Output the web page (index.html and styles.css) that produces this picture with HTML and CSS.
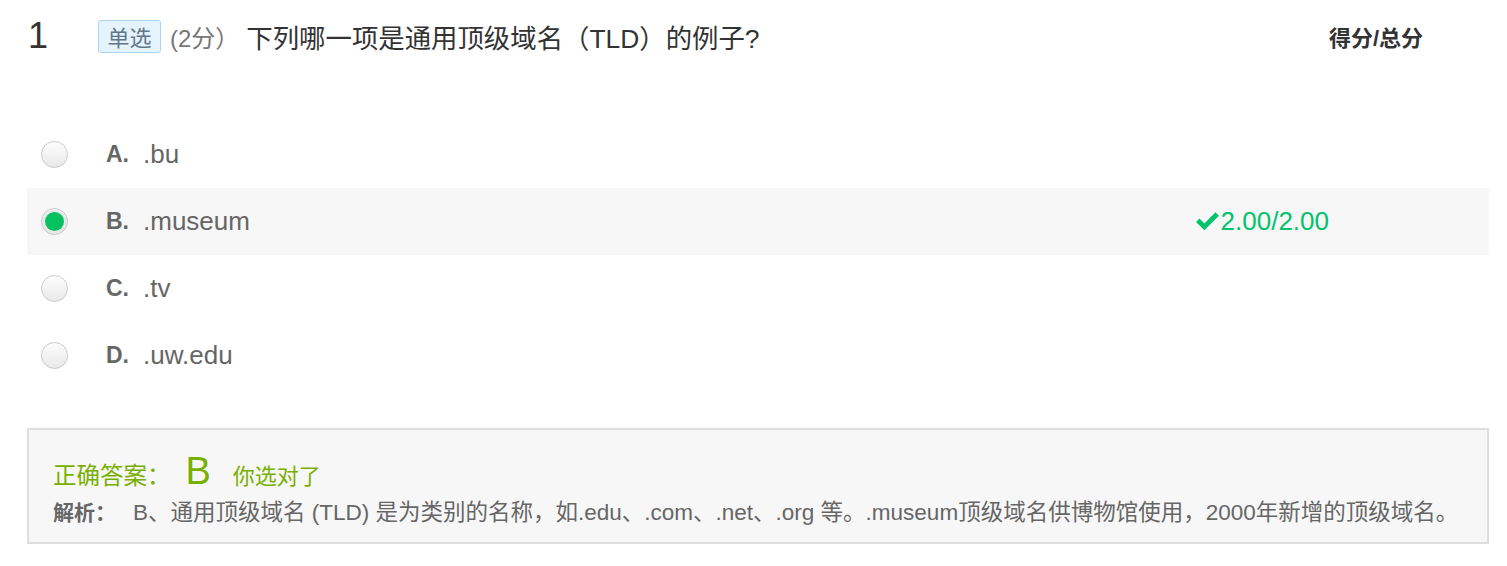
FILE: index.html
```html
<!DOCTYPE html>
<html lang="zh">
<head>
<meta charset="utf-8">
<link rel="stylesheet" href="styles.css">
</head>
<body>
<div class="question">
  <div class="q-head">
    <div class="q-num">1</div>
    <div class="q-title">
      <span class="q-tag">单选</span>
      <span class="q-score">(2分）</span>
      <span class="q-text">下列哪一项是通用顶级域名（TLD）的例子?</span>
    </div>
    <div class="q-total">得分/总分</div>
  </div>

  <div class="options">
    <div class="opt">
      <span class="radio"></span>
      <span class="opt-letter">A.</span>
      <span class="opt-text">.bu</span>
    </div>
    <div class="opt opt-selected">
      <span class="radio radio-on"></span>
      <span class="opt-letter">B.</span>
      <span class="opt-text">.museum</span>
      <span class="opt-score">
        <svg class="check" viewBox="0 0 24 20" width="25" height="21"><path d="M1 10.5 L4.3 7.2 L9 11.9 L19.7 1.2 L23 4.5 L9 18.5 Z" fill="#00c36b"/></svg>2.00/2.00
      </span>
    </div>
    <div class="opt">
      <span class="radio"></span>
      <span class="opt-letter">C.</span>
      <span class="opt-text">.tv</span>
    </div>
    <div class="opt">
      <span class="radio"></span>
      <span class="opt-letter">D.</span>
      <span class="opt-text">.uw.edu</span>
    </div>
  </div>

  <div class="answer">
    <div class="ans-line">
      <span class="ans-label">正确答案：</span>
      <span class="ans-key">B</span>
      <span class="ans-ok">你选对了</span>
    </div>
    <div class="analysis">
      <span class="an-label">解析：</span>
      <span class="an-text">B、通用顶级域名 (TLD) 是为类别的名称，如.edu、.com、.net、.org 等。.museum顶级域名供博物馆使用，2000年新增的顶级域名。</span>
    </div>
  </div>
</div>
</body>
</html>
```

FILE: styles.css
```css
* { box-sizing: border-box; }
html, body { margin: 0; padding: 0; background: #fff; }
body {
  font-family: "Liberation Sans", Arial, "Noto Sans CJK SC", sans-serif;
  color: #333;
}
.question {
  width: 1462px;
  margin-left: 27px;
}
.q-head {
  display: flex;
  align-items: center;
  height: 54px;
  margin-top: 9px;
}
.q-num {
  width: 71px;
  padding-left: 1px;
  font-size: 36px;
  font-weight: 300;
  color: #333;
  font-family: "Liberation Sans", Arial, sans-serif;
}
.q-title {
  display: flex;
  align-items: center;
  flex: 1;
}
.q-tag {
  display: inline-flex;
  align-items: center;
  justify-content: center;
  width: 63px;
  height: 33px;
  background: #e5f3fd;
  border: 1px solid #a9d4f4;
  border-radius: 3px;
  color: #62788a;
  font-size: 22px;
  font-family: "Noto Sans CJK SC", sans-serif;
}
.q-score {
  margin-left: 9px;
  font-size: 24px;
  color: #777;
  font-family: "Liberation Sans", "Noto Sans CJK SC", sans-serif;
}
.q-text {
  margin-left: 7px;
  font-size: 26.4px;
  color: #333;
  font-family: "Liberation Sans", "Noto Sans CJK SC", sans-serif;
}
.q-total {
  padding-right: 66px;
  font-size: 22px;
  font-weight: bold;
  color: #333;
  font-family: "Liberation Sans", "Noto Sans CJK SC", sans-serif;
}
.options {
  margin-top: 58px;
}
.opt {
  display: flex;
  align-items: center;
  height: 67px;
  padding-left: 14px;
}
.opt-selected {
  background: #f7f7f7;
}
.radio {
  width: 27px;
  height: 27px;
  border-radius: 50%;
  border: 1px solid #c9c9c9;
  background: linear-gradient(#fdfdfd, #e9e9e9);
  box-shadow: inset 0 1px 1px rgba(255,255,255,0.8);
  flex: none;
  position: relative;
}
.radio-on {
  border-color: #c8c8c8;
  background: #e8e8e8;
}
.radio-on::after {
  content: "";
  position: absolute;
  left: 3px;
  top: 3px;
  width: 19px;
  height: 19px;
  border-radius: 50%;
  background: #07c160;
}
.opt-letter {
  margin-left: 38px;
  width: 37px;
  font-size: 23px;
  font-weight: bold;
  color: #666;
}
.opt-text {
  font-size: 26px;
  color: #666;
}
.opt-score {
  margin-left: auto;
  padding-right: 160px;
  display: flex;
  align-items: center;
  font-size: 26px;
  color: #00c36b;
}
.check {
  margin-right: 1px;
}
.answer {
  margin-top: 39px;
  height: 116px;
  background: #f7f7f7;
  border: 2px solid #dedede;
  padding: 20px 24px 0 24px;
}
.ans-line {
  display: flex;
  align-items: baseline;
  color: #78b000;
  font-family: "Noto Sans CJK SC", sans-serif;
  height: 40px;
}
.ans-label {
  font-size: 23.5px;
}
.ans-key {
  font-size: 38px;
  margin-left: 15px;
  font-family: "Liberation Sans", sans-serif;
}
.ans-ok {
  margin-left: 22px;
  font-size: 22px;
}
.analysis {
  display: flex;
  align-items: baseline;
  margin-top: 4px;
  font-size: 22.5px;
  color: #666;
  font-family: "Liberation Sans", "Noto Sans CJK SC", sans-serif;
}
.an-label {
  font-weight: bold;
  width: 80px;
  font-size: 21px;
  font-family: "Noto Sans CJK SC", sans-serif;
}
.an-text {
  white-space: nowrap;
}
```
